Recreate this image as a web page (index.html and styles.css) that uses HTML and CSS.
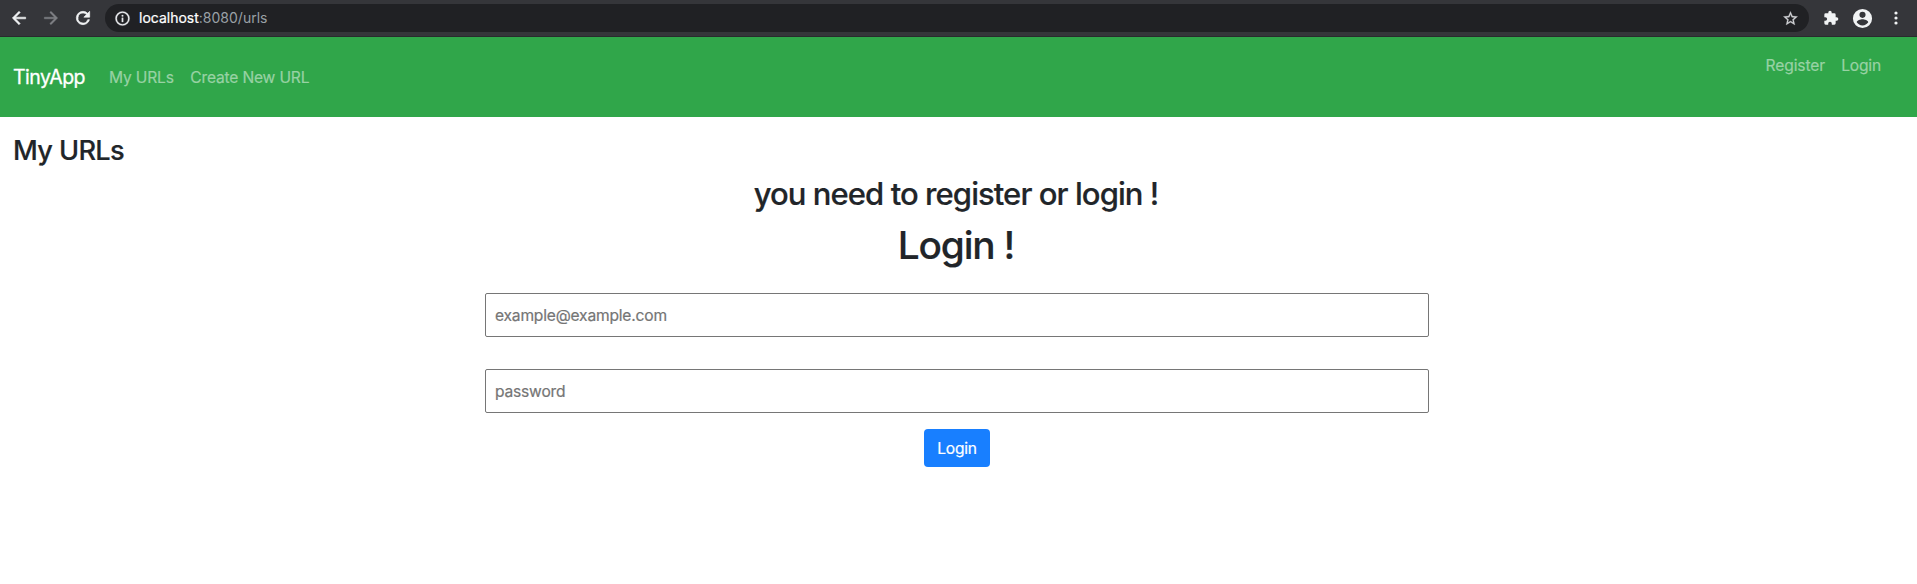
FILE: index.html
```html
<!DOCTYPE html>
<html lang="en">
<head>
<meta charset="utf-8">
<title>TinyApp</title>
<link rel="stylesheet" href="styles.css">
</head>
<body>
<header class="toolbar">
  <svg class="icon" viewBox="0 0 24 24"><path fill="#f1f3f4" stroke="#f1f3f4" stroke-width=".7" d="M20 11H7.83l5.59-5.59L12 4l-8 8 8 8 1.41-1.41L7.83 13H20z"/></svg>
  <svg class="icon" viewBox="0 0 24 24"><path fill="#7f8185" stroke="#7f8185" stroke-width=".5" d="M12 4l-1.41 1.41L16.17 11H4v2h12.17l-5.58 5.59L12 20l8-8z"/></svg>
  <svg class="icon" viewBox="0 0 24 24"><path fill="#f1f3f4" stroke="#f1f3f4" stroke-width=".8" d="M17.65 6.35A7.96 7.96 0 0 0 12 4a8 8 0 1 0 7.73 10h-2.08A6 6 0 1 1 12 6c1.66 0 3.14.69 4.22 1.78L13 11h7V4z"/></svg>
  <div class="address">
    <svg class="info" viewBox="0 0 24 24"><path fill="#e8eaed" stroke="#e8eaed" stroke-width=".4" d="M11 7h2v2h-2zm0 4h2v6h-2zm1-9a10 10 0 1 0 0 20 10 10 0 0 0 0-20zm0 18a8 8 0 1 1 0-16 8 8 0 0 1 0 16z"/></svg>
    <span class="location"><span class="host">localhost</span>:8080/urls</span>
    <svg class="star" viewBox="0 0 24 24"><path fill="#d0d2d5" stroke="#d0d2d5" stroke-width=".4" d="M22 9.24l-7.19-.62L12 2 9.19 8.63 2 9.24l5.46 4.73L5.82 21 12 17.27 18.18 21l-1.63-7.03zM12 15.4l-3.76 2.27 1-4.28-3.32-2.88 4.38-.38L12 6.1l1.71 4.04 4.38.38-3.32 2.88 1 4.28z"/></svg>
  </div>
  <svg class="puzzle" viewBox="0 0 24 24"><path fill="#f1f3f4" d="M20.5 11H19V7a2 2 0 0 0-2-2h-4V3.5a2.5 2.5 0 0 0-5 0V5H4a2 2 0 0 0-2 2v3.8h1.5a2.7 2.7 0 0 1 0 5.4H2V20a2 2 0 0 0 2 2h3.800v-1.500a2.700 2.700 0 0 1 5.400 0V22H17a2 2 0 0 0 2-2v-4h1.500a2.500 2.500 0 0 0 0-5z"/></svg>
  <svg class="avatar" viewBox="0 0 24 24"><path fill="#f1f3f4" d="M12 2a10 10 0 1 0 0 20 10 10 0 0 0 0-20zm0 3a3.200 3.200 0 1 1 0 6.400A3.200 3.200 0 0 1 12 5zm0 14.200a7.200 7.200 0 0 1-6-3.220c.03-1.990 4-3.080 6-3.080 1.990 0 5.970 1.090 6 3.080a7.200 7.200 0 0 1-6 3.220z"/></svg>
  <svg class="dots" viewBox="0 0 4 14"><g fill="#f1f3f4"><circle cx="2" cy="2" r="1.600"/><circle cx="2" cy="7" r="1.600"/><circle cx="2" cy="12" r="1.600"/></g></svg>
</header>
<nav class="navbar">
  <a class="brand">TinyApp</a>
  <a class="link my-urls">My URLs</a>
  <a class="link create">Create New URL</a>
  <div class="account">
    <a class="link register">Register</a>
    <a class="link">Login</a>
  </div>
</nav>
<main class="page">
  <h3 class="title">My URLs</h3>
  <h2 class="notice">you need to register or login !</h2>
  <h1 class="heading">Login !</h1>
  <form class="form">
    <input class="field email" type="email" placeholder="example@example.com">
    <input class="field password" type="text" placeholder="password">
    <button class="submit" type="button">Login</button>
  </form>
</main>
</body>
</html>
```
FILE: styles.css
```css
* { box-sizing: border-box; }
body {
  margin: 0;
  background: #fff;
  color: #212529;
  font: 15.6px/24px Inter, "Liberation Sans", sans-serif;
  overflow: hidden;
}
.toolbar {
  display: flex;
  align-items: center;
  height: 37px;
  padding-left: 9px;
  background: #35363a;
  border-bottom: 1px solid #292a2d;
}
.toolbar svg { display: block; flex: none; }
.icon { width: 20px; height: 20px; margin-right: 12px; }
.address {
  display: flex;
  align-items: center;
  width: 1704px;
  height: 28px;
  padding: 0 10px;
  border-radius: 14px;
  background: #202124;
}
.info { width: 17px; height: 17px; margin: 0 8px 0 -1px; }
.location { flex: 1; color: #9aa0a6; font-size: 14px; }
.host { color: #fff; -webkit-text-stroke: .2px #fff; }
.star { width: 17px; height: 17px; }
.puzzle { width: 16px; height: 16px; margin-left: 14px; }
.avatar { width: 23px; height: 23px; margin-left: 12px; }
.dots { width: 4px; height: 14px; margin-left: 20px; }
.navbar {
  display: flex;
  align-items: center;
  height: 80px;
  padding: 0 36px 0 13px;
  background: #30a64a;
}
.brand {
  width: 96px;
  color: #fff;
  font-size: 19.5px;
  letter-spacing: -.5px;
  -webkit-text-stroke: .3px #fff;
}
.link { padding-top: 2px; color: #98d2a4; letter-spacing: -.18px; -webkit-text-stroke: .2px #98d2a4; }
.create { margin-left: 16.5px; }
.account {
  display: flex;
  gap: 16px;
  align-self: flex-start;
  margin: 15px 0 0 auto;
}
.register { letter-spacing: -.08px; }
.page { padding: 16px 3px 0 0; text-align: center; }
.title, .notice, .heading { margin: 0 0 8px; font-weight: 500; -webkit-text-stroke: .2px #212529; }
.title { padding: 1px 0 0 13px; font-size: 27.2px; line-height: 33px; letter-spacing: -.65px; text-align: left; }
.notice { padding-right: 2px; font-size: 31px; line-height: 38px; letter-spacing: -.93px; }
.heading { padding-right: 2px; font-size: 38.8px; line-height: 48px; letter-spacing: -1.2px; }
.form { display: flex; flex-direction: column; align-items: center; padding-top: 16px; }
.field {
  width: 944px;
  height: 44px;
  margin: 0 0 32px;
  padding: 0 9px;
  border: 1px solid #767676;
  border-radius: 2px;
  background: #fff;
  font: inherit;
  letter-spacing: -.2px;
}
.field::placeholder { color: #757575; opacity: 1; -webkit-text-stroke: .2px #757575; }
.password { margin-bottom: 16px; }
.submit {
  width: 66px;
  height: 38px;
  padding: 2px 0 0;
  border: 0;
  border-radius: 4px;
  background: #187fff;
  color: #fff;
  font: inherit;
  letter-spacing: -.2px;
  -webkit-text-stroke: .2px #fff;
}
```
